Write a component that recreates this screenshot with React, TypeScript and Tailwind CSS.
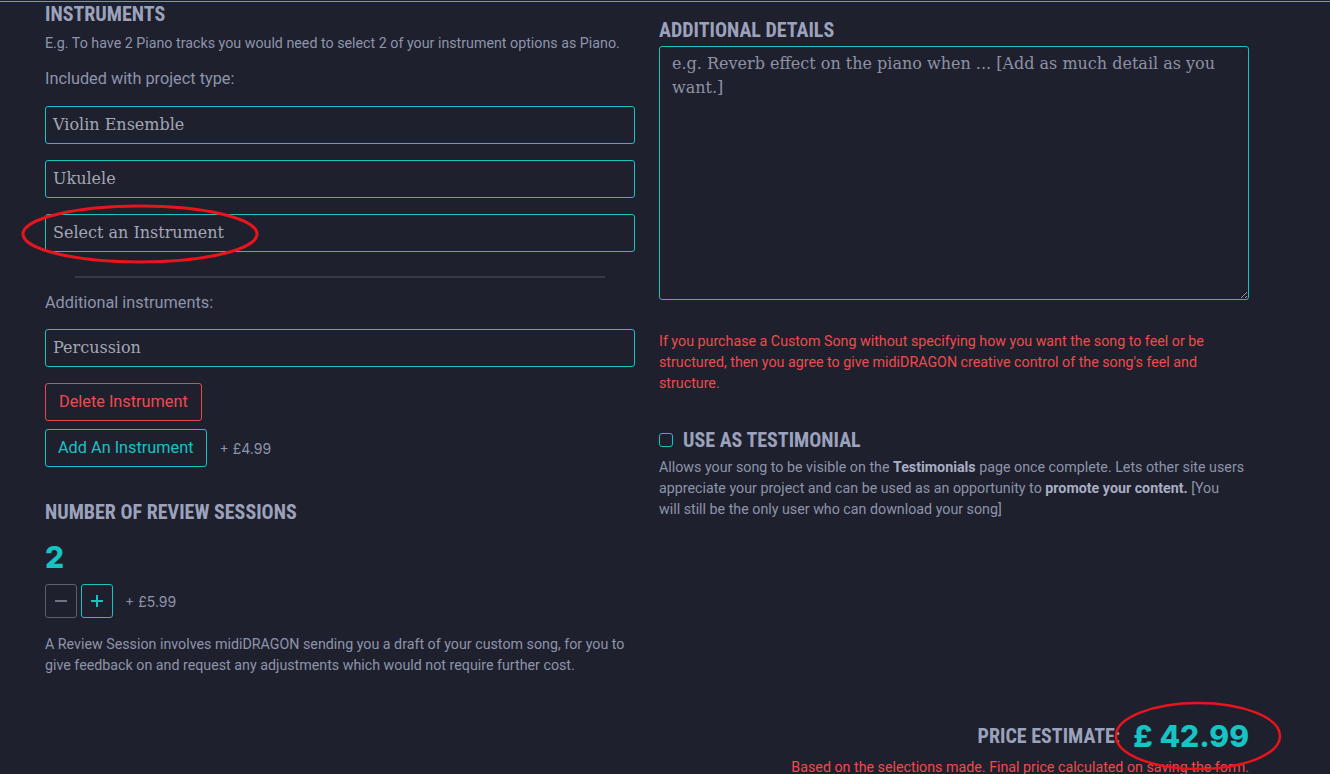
import React from "react"

const cond = { fontFamily: '"Liberation Sans Narrow", "Roboto Condensed", Roboto, sans-serif' }
const body = { fontFamily: 'Roboto, "Liberation Sans", sans-serif' }
const slab = { fontFamily: '"DejaVu Serif", "Liberation Serif", serif' }
const geo = { fontFamily: 'Inter, "DejaVu Sans", sans-serif' }

function Field({ value }: { value: string }) {
  return (
    <div
      style={slab}
      className="h-[38px] rounded-[3px] border border-[#17c3c3] px-[7px] flex items-center text-[16px] text-[#a3a7b6]"
    >
      {value}
    </div>
  )
}

function Heading({ children }: { children: React.ReactNode }) {
  return (
    <h2 style={cond} className="text-[20px] leading-[24px] font-bold uppercase text-[#9ca2bb]">
      {children}
    </h2>
  )
}

export default function App() {
  return (
    <div style={body} className="relative min-h-screen w-full bg-[#1e202d] overflow-hidden">
      <div className="h-px" />
      <div className="h-px bg-[#17c3c3]" />

      <div className="flex gap-6 pl-[45px]">
        {/* left column */}
        <div className="w-[590px] flex flex-col">
          <Heading>Instruments</Heading>
          <p className="mt-[7px] text-[14.25px] leading-[21px] text-[#8e94ab]">
            E.g. To have 2 Piano tracks you would need to select 2 of your instrument options as Piano.
          </p>
          <p className="mt-[13px] text-[16.3px] leading-[24px] text-[#8e94ab]">Included with project type:</p>
          <div className="mt-[15px] flex flex-col gap-4">
            <Field value="Violin Ensemble" />
            <Field value="Ukulele" />
            <Field value="Select an Instrument" />
          </div>
          <div className="mx-[30px] mt-6 h-[2px] bg-[#363947]" />
          <p className="mt-[13px] text-[16.3px] leading-[24px] text-[#8e94ab]">Additional instruments:</p>
          <div className="mt-[14px]">
            <Field value="Percussion" />
          </div>
          <div className="mt-4">
            <button className="h-[38px] px-[13px] rounded-[3px] border border-[#e84848] text-[16.3px] text-[#f04b4b]">
              Delete Instrument
            </button>
          </div>
          <div className="mt-2 flex items-center gap-[13px]">
            <button className="h-[38px] px-3 rounded-[3px] border border-[#17c3c3] text-[16.3px] text-[#17c3c3]">
              Add An Instrument
            </button>
            <span style={geo} className="text-[14px] text-[#8e94ab]">+ £4.99</span>
          </div>

          <div className="mt-[33px]">
            <Heading>Number of review sessions</Heading>
          </div>
          <div style={geo} className="mt-[15px] text-[30px] leading-[36px] font-extrabold text-[#17c3c3]">2</div>
          <div className="mt-[9px] flex items-center">
            <button className="w-[32px] h-[34px] rounded-[3px] border border-[#5b5f6e] flex items-center justify-center text-[#6e7385]">
              <svg width="14" height="14" viewBox="0 0 14 14"><path d="M1 7h12" stroke="currentColor" strokeWidth="2" /></svg>
            </button>
            <button className="ml-[4px] w-[32px] h-[34px] rounded-[3px] border border-[#17c3c3] flex items-center justify-center text-[#17c3c3]">
              <svg width="14" height="14" viewBox="0 0 14 14"><path d="M1 7h12M7 1v12" stroke="currentColor" strokeWidth="2" /></svg>
            </button>
            <span style={geo} className="ml-3 text-[14px] text-[#8e94ab]">+ £5.99</span>
          </div>
          <p className="mt-4 text-[14.25px] leading-[21px] text-[#8e94ab]">
            A Review Session involves midiDRAGON sending you a draft of your custom song, for you to give feedback on and request any adjustments which would not require further cost.
          </p>
        </div>

        {/* right column */}
        <div className="w-[590px] flex flex-col">
          <div className="mt-4">
            <Heading>Additional details</Heading>
          </div>
          <textarea
            style={slab}
            placeholder="e.g. Reverb effect on the piano when ... [Add as much detail as you want.]"
            className="mt-1 h-[254px] w-full rounded-[3px] border border-[#17c3c3] bg-transparent px-3 pt-[5px] text-[16px] leading-[24px] text-[#a3a7b6] placeholder:text-[#8e92a4] outline-none"
          />
          <p className="mt-[31px] text-[14.25px] leading-[21px] text-[#f04b4b]">
            If you purchase a Custom Song without specifying how you want the song to feel or be structured, then you agree to give midiDRAGON creative control of the song's feel and structure.
          </p>
          <label className="mt-[34px] flex items-center gap-[10px]">
            <span className="w-[14px] h-[14px] rounded-[3px] border-[1.5px] border-[#17c3c3]" />
            <Heading>Use as testimonial</Heading>
          </label>
          <p className="mt-[5px] text-[14.25px] leading-[21px] text-[#8e94ab]">
            Allows your song to be visible on the <b className="text-[#a9aec4]">Testimonials</b> page once complete. Lets other site users appreciate your project and can be used as an opportunity to <b className="text-[#a9aec4]">promote your content.</b> [You<br />will still be the only user who can download your song]
          </p>
        </div>
      </div>

      {/* price estimate */}
      <div className="mt-[42px] w-[1249px] flex flex-col items-end">
        <div className="flex items-center gap-[13px]">
          <span style={cond} className="text-[20px] leading-[24px] font-bold uppercase text-[#9ca2bb]">Price estimate:</span>
          <span style={geo} className="text-[30px] leading-[36px] font-extrabold text-[#17c3c3]">£ 42.99</span>
        </div>
        <p className="mt-[3px] text-[14.25px] leading-[20px] text-[#f04b4b]">
          Based on the selections made. Final price calculated on saving the form.
        </p>
      </div>

      {/* annotation marks */}
      <svg className="absolute left-[20px] top-[203px]" width="240" height="62" viewBox="0 0 240 62">
        <ellipse cx="120" cy="31" rx="117" ry="28" fill="none" stroke="#e8141e" strokeWidth="3" />
      </svg>
      <svg className="absolute left-[1113px] top-[700px]" width="170" height="72" viewBox="0 0 170 72">
        <ellipse cx="85" cy="36" rx="82" ry="33" fill="none" stroke="#e8141e" strokeWidth="2.5" />
      </svg>
    </div>
  )
}
